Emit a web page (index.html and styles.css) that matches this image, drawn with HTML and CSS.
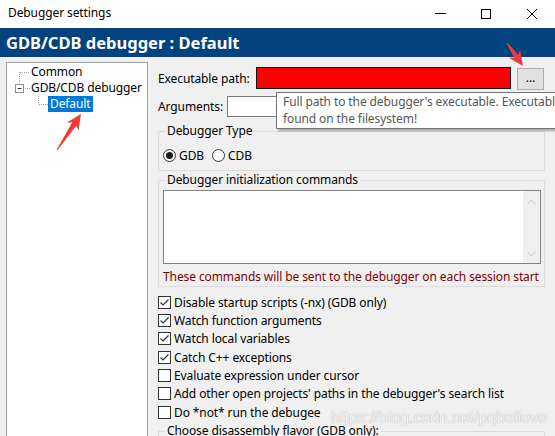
FILE: index.html
```html
<!DOCTYPE html>
<html>
<head>
<meta charset="utf-8">
<title>Debugger settings</title>
<link rel="stylesheet" href="styles.css">
</head>
<body>
<div class="titlebar">
  <div class="title">Debugger settings</div>
  <div class="controls">
    <div class="ctl"><svg width="11" height="10" viewBox="0 0 11 10"><line x1="0" y1="4.5" x2="11" y2="4.5" stroke="#000" stroke-width="1"/></svg></div>
    <div class="ctl"><svg width="10" height="10" viewBox="0 0 10 10"><rect x="0.5" y="0.5" width="9" height="9" fill="none" stroke="#000" stroke-width="1"/></svg></div>
    <div class="ctl"><svg width="10" height="10" viewBox="0 0 10 10"><line x1="0" y1="0" x2="10" y2="10" stroke="#000" stroke-width="1"/><line x1="10" y1="0" x2="0" y2="10" stroke="#000" stroke-width="1"/></svg></div>
  </div>
</div>
<div class="header">GDB/CDB debugger : Default</div>
<div class="main">
  <div class="tree">
    <div class="node">
      <svg width="24" height="16" viewBox="0 0 24 16"><line x1="12.5" y1="8" x2="12.5" y2="16" class="dots"/><line x1="13" y1="8.5" x2="23" y2="8.5" class="dots"/></svg>
      <span class="node-label">Common</span>
    </div>
    <div class="node">
      <svg width="24" height="16" viewBox="0 0 24 16"><line x1="12.5" y1="0" x2="12.5" y2="4" class="dots"/><rect x="8.5" y="4.5" width="8" height="8" fill="#fff" stroke="#919191"/><line x1="10.5" y1="8.5" x2="14.5" y2="8.5" stroke="#333"/><line x1="18" y1="8.5" x2="23" y2="8.5" class="dots"/></svg>
      <span class="node-label">GDB/CDB debugger</span>
    </div>
    <div class="node selected">
      <svg width="41" height="16" viewBox="0 0 41 16"><line x1="31.5" y1="0" x2="31.5" y2="8" class="dots"/><line x1="32" y1="8.5" x2="41" y2="8.5" class="dots"/></svg>
      <span class="node-label">Default</span>
    </div>
  </div>
  <div class="content">
    <div class="path-row">
      <span class="lbl lbl-path">Executable path:</span>
      <div class="input input-red"></div>
      <div class="btn">...</div>
    </div>
    <div class="args-row">
      <span class="lbl lbl-args">Arguments:</span>
      <div class="input input-args"></div>
    </div>
    <fieldset class="group group-type">
      <legend>Debugger Type</legend>
      <div class="radio-row">
        <span class="radio checked"><span class="dot"></span></span><span class="radio-lbl">GDB</span>
        <span class="radio second"></span><span class="radio-lbl">CDB</span>
      </div>
    </fieldset>
    <fieldset class="group group-init">
      <legend>Debugger initialization commands</legend>
      <div class="textarea">
        <div class="scrollbar">
          <svg width="9" height="6" viewBox="0 0 9 6"><polyline points="0.5,5 4.5,1 8.5,5" fill="none" stroke="#c2c2c2"/></svg>
          <svg width="9" height="6" viewBox="0 0 9 6"><polyline points="0.5,1 4.5,5 8.5,1" fill="none" stroke="#c2c2c2"/></svg>
        </div>
      </div>
      <div class="note">These commands will be sent to the debugger on each session start</div>
    </fieldset>
    <div class="checks">
      <div class="check"><span class="cb"><svg width="11" height="11" viewBox="0 0 11 11"><polyline points="1.5,5.5 4,8 9.5,2.5" fill="none" stroke="#333" stroke-width="1.2"/></svg></span><span>Disable startup scripts (-nx) (GDB only)</span></div>
      <div class="check"><span class="cb"><svg width="11" height="11" viewBox="0 0 11 11"><polyline points="1.5,5.5 4,8 9.5,2.5" fill="none" stroke="#333" stroke-width="1.2"/></svg></span><span>Watch function arguments</span></div>
      <div class="check"><span class="cb"><svg width="11" height="11" viewBox="0 0 11 11"><polyline points="1.5,5.5 4,8 9.5,2.5" fill="none" stroke="#333" stroke-width="1.2"/></svg></span><span>Watch local variables</span></div>
      <div class="check"><span class="cb"><svg width="11" height="11" viewBox="0 0 11 11"><polyline points="1.5,5.5 4,8 9.5,2.5" fill="none" stroke="#333" stroke-width="1.2"/></svg></span><span>Catch C++ exceptions</span></div>
      <div class="check"><span class="cb"></span><span>Evaluate expression under cursor</span></div>
      <div class="check"><span class="cb"></span><span>Add other open projects' paths in the debugger's search list</span></div>
      <div class="check"><span class="cb"></span><span>Do *not* run the debugee</span></div>
    </div>
    <fieldset class="group group-flavor">
      <legend>Choose disassembly flavor (GDB only):</legend>
      <div class="flavor-body"></div>
    </fieldset>
  </div>
</div>

<div class="tooltip">
  <div>Full path to the debugger's executable. Executable must be</div>
  <div>found on the filesystem!</div>
</div>

<div class="watermark">https://blog.csdn.net/pqbelieve</div>

<svg class="arrows" width="555" height="436" viewBox="0 0 555 436">
  <polygon points="507.4,42.7 518.2,54.7 520.1,49.7 523,66 508.7,57.7 514.1,57.5 506.6,43.3" fill="#f23a3a"/>
  <polygon points="56.6,149.7 72.2,122.6 66.9,122.6 81,114 78.5,130.4 76.4,125.4 57.4,150.3" fill="#f23a3a"/>
</svg>
</body>
</html>
```

FILE: styles.css
```css
* { box-sizing: border-box; }
html, body { margin: 0; padding: 0; }
body {
  width: 555px;
  height: 436px;
  overflow: hidden;
  position: relative;
  background: #f0f0f0;
  font-family: "Noto Sans", "Liberation Sans", sans-serif;
  font-size: 12px;
  letter-spacing: -0.1px;
  color: #000;
}
.titlebar {
  height: 28px;
  background: #fff;
  display: flex;
  align-items: center;
}
.title { padding-left: 8px; line-height: 16px; margin-top: -2px; }
.controls { margin-left: auto; display: flex; height: 28px; }
.ctl {
  width: 46px;
  height: 28px;
  display: flex;
  align-items: center;
  justify-content: center;
}
.ctl svg { display: block; }
.header {
  height: 29px;
  background: #02427f;
  color: #fff;
  font-weight: bold;
  font-size: 16.5px;
  letter-spacing: 0;
  line-height: 29px;
  padding-left: 6px;
  white-space: nowrap;
}
.main { display: flex; align-items: flex-start; padding-top: 5px; }
.tree {
  flex: none;
  margin-left: 6px;
  width: 142px;
  height: 400px;
  background: #fff;
  border: 1px solid #a0a0a0;
  padding-top: 1px;
}
.node { display: flex; height: 16px; align-items: center; }
.node svg { flex: none; display: block; }
.dots { stroke: #a0a0a0; stroke-width: 1; stroke-dasharray: 1 1; }
.node-label { line-height: 16px; white-space: nowrap; }
.node.selected .node-label { background: #0078d7; color: #fff; padding: 0 2px; }

.content { flex: none; margin-left: 10px; width: 387px; padding-top: 5px; }
.lbl { flex: none; white-space: nowrap; }
.path-row { display: flex; align-items: center; height: 22px; }
.lbl-path { width: 98px; }
.input { height: 22px; background: #fff; border: 1px solid #7a7a7a; }
.input-red { width: 255px; background: #ff0000; border-color: #111; }
.btn {
  margin-left: 6px;
  width: 27px;
  height: 22px;
  margin-top: 2px;
  background: #e1e1e1;
  border: 1px solid #adadad;
  text-align: center;
  line-height: 18px;
}
.args-row { display: flex; align-items: center; height: 21px; margin-top: 7px; }
.lbl-args { width: 69px; }
.input-args { flex: 1; height: 21px; margin-right: 1px; }

.group {
  margin: 0;
  border: 1px solid #dcdcdc;
  padding: 0 3px 0 4px;
  min-width: 0;
}
.group legend { padding: 0 2px; margin-left: 2px; line-height: 16px; }
.group-type { margin-top: 6px; padding-top: 8px; padding-bottom: 7px; }
.radio-row { display: flex; align-items: center; height: 16px; }
.radio {
  width: 13px;
  height: 13px;
  border: 1px solid #333;
  border-radius: 50%;
  background: #fff;
  display: flex;
  align-items: center;
  justify-content: center;
  flex: none;
}
.radio .dot { width: 7px; height: 7px; border-radius: 50%; background: #1a1a1a; }
.radio.second { margin-left: 8px; }
.radio-lbl { margin-left: 3px; }

.group-init { margin-top: 1px; padding-top: 2px; padding-bottom: 1px; }
.textarea {
  height: 74px;
  background: #fff;
  border: 1px solid #828282;
  display: flex;
  justify-content: flex-end;
}
.scrollbar {
  width: 17px;
  background: #f0f0f0;
  display: flex;
  flex-direction: column;
  justify-content: space-between;
  align-items: center;
  padding: 8px 0 6px;
}
.scrollbar svg { display: block; }
.note { color: #800000; line-height: 16px; margin-top: 5px; white-space: nowrap; }

.checks { margin-top: 6px; }
.check { display: flex; align-items: center; height: 18.33px; white-space: nowrap; }
.cb {
  flex: none;
  width: 13px;
  height: 13px;
  border: 1px solid #333;
  background: #fff;
  margin-right: 3px;
  display: flex;
  align-items: center;
  justify-content: center;
}
.cb svg { display: block; }
.group-flavor { margin-top: 2px; }
.flavor-body { height: 40px; }

.tooltip {
  position: absolute;
  left: 276px;
  top: 92px;
  width: 340px;
  height: 37px;
  background: #fff;
  border: 1px solid #767676;
  box-shadow: 2px 2px 2px rgba(0, 0, 0, 0.3);
  color: #575757;
  padding: 0 6px;
  line-height: 17px;
  white-space: nowrap;
}
.watermark {
  position: absolute;
  left: 331px;
  top: 408px;
  font-family: "Liberation Sans", sans-serif;
  font-size: 16px;
  letter-spacing: 0;
  line-height: 20px;
  color: rgba(255, 255, 255, 0.9);
  text-shadow: 0 0 1px rgba(110, 110, 110, 0.7);
  white-space: nowrap;
}
.arrows { position: absolute; left: 0; top: 0; pointer-events: none; }
```
